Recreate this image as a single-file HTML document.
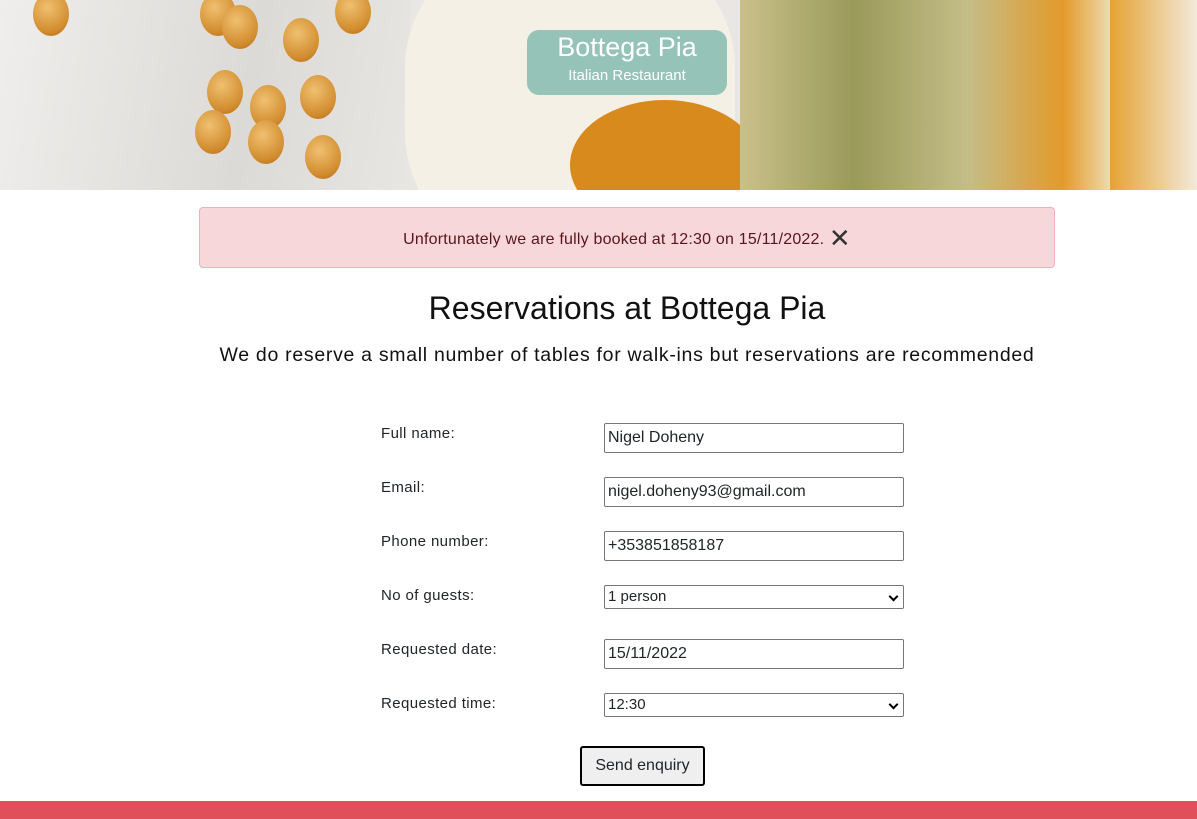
<!DOCTYPE html>
<html><head><meta charset="utf-8"><style>
*{box-sizing:border-box}
body{margin:0;width:1197px;height:819px;overflow:hidden;font-family:"Liberation Sans",sans-serif;color:#212529;background:#fff;position:relative}
.hdr{position:absolute;left:0;top:0;width:1197px;height:190px;overflow:hidden;background:#e9e7e4}
.b{position:absolute}
.cp{position:absolute;width:36px;height:44px;border-radius:50%;background:radial-gradient(circle at 40% 35%,#f0c070,#d08a2c 70%,#a8651c)}
.brand{position:absolute;left:527px;top:30px;width:200px;height:65px;border-radius:12px;background:rgba(100,170,160,.65);color:#fff;text-align:center}
.brand .t{font-size:27px;margin-top:2px}
.brand .s{font-size:15px;margin-top:4px}
.alert{position:absolute;left:199px;top:207px;width:856px;height:61px;background:#f8d7da;border:1px solid #f1b0b7;border-radius:4px;color:#58151c;font-size:16px;text-align:center;line-height:60px;letter-spacing:.2px}
h1{position:absolute;left:0;width:1254px;top:290px;margin:0;font-weight:400;font-size:32px;text-align:center;color:#111}
.sub{position:absolute;left:0;width:1254px;top:344px;font-size:19.5px;text-align:center;letter-spacing:.7px;color:#111}
.lbl{position:absolute;left:381px;font-size:15px;letter-spacing:.4px}
.inp{position:absolute;left:604px;width:300px;height:30px;border:1px solid #767676;border-radius:2px;font-size:16px;padding:3px 3px;line-height:22px}
.sel{height:24px;padding:1px 3px;line-height:20px;font-size:15px}
.sel:after{content:"";position:absolute;right:6px;top:7px;width:5px;height:5px;border-right:2px solid #000;border-bottom:2px solid #000;transform:rotate(45deg)}
.btn{position:absolute;left:580px;top:746px;width:125px;height:40px;border:2px solid #000;border-radius:3px;background:#efefef;font-size:16px;text-align:center;line-height:36px}
.foot{position:absolute;left:0;top:801px;width:1197px;height:18px;background:#e0505a}
</style></head><body>
<div class="hdr">
 <div class="b" style="left:0;top:0;width:410px;height:190px;background:linear-gradient(100deg,#efeeec,#dcdad7 60%,#e8e6e3)"></div>
 <div class="b" style="left:405px;top:-60px;width:330px;height:320px;border-radius:40%;background:#f4f0e6"></div>
 <div class="b" style="left:570px;top:100px;width:190px;height:130px;border-radius:50%;background:#d98a1c"></div>
 <div class="b" style="left:740px;top:0;width:380px;height:190px;background:linear-gradient(90deg,#c9c08a,#9a9a5a 30%,#c4bd88 60%,#e39a2a 85%,#f0e8c8)"></div>
 <div class="b" style="left:1110px;top:0;width:87px;height:190px;background:linear-gradient(90deg,#e6a233,#f2eadb)"></div>
 <div class="cp" style="left:33px;top:-8px"></div>
 <div class="cp" style="left:200px;top:-8px"></div><div class="cp" style="left:222px;top:5px"></div>
 <div class="cp" style="left:283px;top:18px"></div><div class="cp" style="left:335px;top:-10px"></div>
 <div class="cp" style="left:207px;top:70px"></div><div class="cp" style="left:250px;top:85px"></div><div class="cp" style="left:300px;top:75px"></div>
 <div class="cp" style="left:195px;top:110px"></div><div class="cp" style="left:248px;top:120px"></div><div class="cp" style="left:305px;top:135px"></div>
 <div class="brand"><div class="t">Bottega Pia</div><div class="s">Italian Restaurant</div></div>
</div>
<div class="alert">Unfortunately we are fully booked at 12:30 on 15/11/2022. <span style="font-size:26px;vertical-align:-3px;color:#333">✕</span></div>
<h1>Reservations at Bottega Pia</h1>
<div class="sub">We do reserve a small number of tables for walk-ins but reservations are recommended</div>
<div class="lbl" style="top:425px">Full name:</div><div class="inp" style="top:423px">Nigel Doheny</div>
<div class="lbl" style="top:479px">Email:</div><div class="inp" style="top:477px">nigel.doheny93@gmail.com</div>
<div class="lbl" style="top:533px">Phone number:</div><div class="inp" style="top:531px">+353851858187</div>
<div class="lbl" style="top:587px">No of guests:</div><div class="inp sel" style="top:585px">1 person</div>
<div class="lbl" style="top:641px">Requested date:</div><div class="inp" style="top:639px">15/11/2022</div>
<div class="lbl" style="top:695px">Requested time:</div><div class="inp sel" style="top:693px">12:30</div>
<div class="btn">Send enquiry</div>
<div class="foot"></div>
</body></html>
